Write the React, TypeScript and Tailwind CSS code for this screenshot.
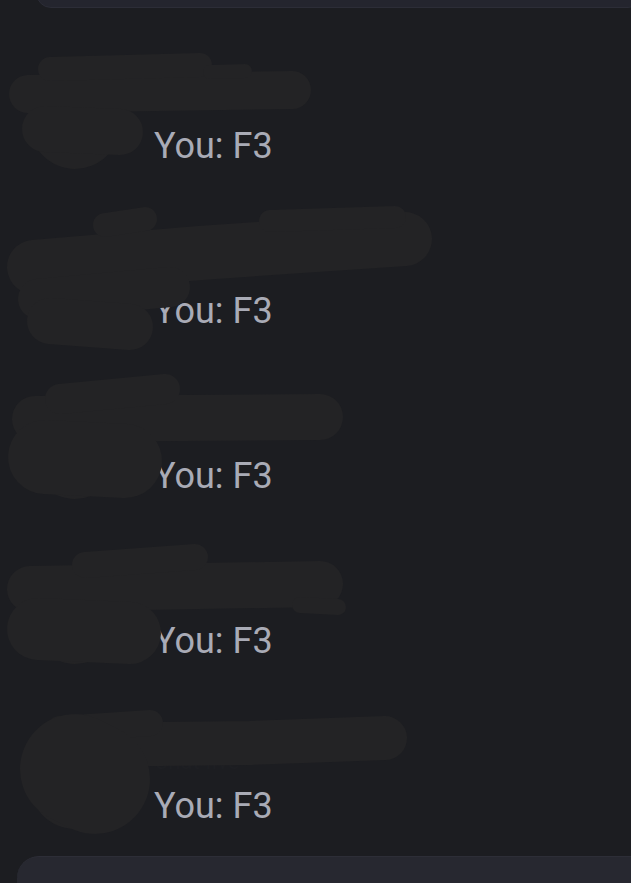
import React from "react";

type Stroke = { d: string; w: number };

// redaction scribbles, drawn in page coordinates and shifted per row
const scribbles: Stroke[][] = [
  [
    { d: "M28 95 L292 91", w: 38 },
    { d: "M50 70 L200 66", w: 24 },
    { d: "M210 73 L245 72", w: 14 },
    { d: "M45 130 L120 133", w: 46 },
  ],
  [
    { d: "M34 268 L200 254 L405 240", w: 54 },
    { d: "M270 222 L395 218", w: 22 },
    { d: "M38 300 L170 288", w: 40 },
    { d: "M50 322 L130 328", w: 46 },
    { d: "M105 226 L145 220", w: 24 },
  ],
  [
    { d: "M35 420 L320 418", w: 46 },
    { d: "M60 400 L165 390", w: 30 },
    { d: "M45 458 L125 462", w: 74 },
  ],
  [
    { d: "M30 590 L320 585", w: 46 },
    { d: "M300 606 L338 608", w: 16 },
    { d: "M85 566 L195 558", w: 26 },
    { d: "M38 630 L130 634", w: 62 },
  ],
  [
    { d: "M70 746 L250 744 L385 739", w: 44 },
    { d: "M60 730 L150 724", w: 26 },
    { d: "M75 770 L95 780", w: 110 },
  ],
];

const ROW_H = 165;
const FIRST_ROW_TOP = 42;

const Redaction = ({ index }: { index: number }) => (
  <svg
    className="absolute left-0 top-0 pointer-events-none"
    width={631}
    height={ROW_H}
    viewBox={`0 0 631 ${ROW_H}`}
    overflow="visible"
  >
    <g
      transform={`translate(0 ${-(FIRST_ROW_TOP + index * ROW_H)})`}
      stroke="#232325"
      fill="none"
      strokeLinecap="round"
      strokeLinejoin="round"
    >
      {scribbles[index].map((s, i) => (
        <path key={i} d={s.d} strokeWidth={s.w} />
      ))}
    </g>
  </svg>
);

const ChatRow = ({ index, name }: { index: number; name: string }) => (
  <div className="relative flex items-center h-[165px] shrink-0">
    <div className="ml-[30px] w-[90px] h-[90px] rounded-full bg-[#232325] shrink-0" />
    <div className="ml-[34px] flex flex-col min-w-0">
      <p className="h-[44px] leading-[44px] text-[22px] text-[#1e1f23] truncate">{name}</p>
      <p className="h-[44px] leading-[44px] text-[36px] text-[#a9abb6]">You: F3</p>
    </div>
    <Redaction index={index} />
  </div>
);

const names = ["Chat one", "Chat two", "Chat three", "Chat four", "Chat five"];

export default function App() {
  return (
    <div
      className="w-[631px] h-[883px] bg-[#1c1d21] flex flex-col overflow-hidden"
      style={{ fontFamily: "Roboto, 'Noto Sans', sans-serif" }}
    >
      <div className="h-[8px] overflow-hidden shrink-0">
        <div className="h-[30px] -mt-[22px] ml-[36px] -mr-[12px] rounded-[18px] bg-[#24252e] border border-[#2c2d37]" />
      </div>

      <div className="flex-1 min-h-0 overflow-hidden pt-[33px] flex flex-col">
        {names.map((n, i) => (
          <ChatRow key={i} index={i} name={n} />
        ))}
      </div>

      <div className="h-[27px] overflow-hidden shrink-0">
        <div className="h-[60px] ml-[17px] -mr-[24px] rounded-[22px] bg-[#272830] border-t border-[#2d2e37]" />
      </div>
    </div>
  );
}
